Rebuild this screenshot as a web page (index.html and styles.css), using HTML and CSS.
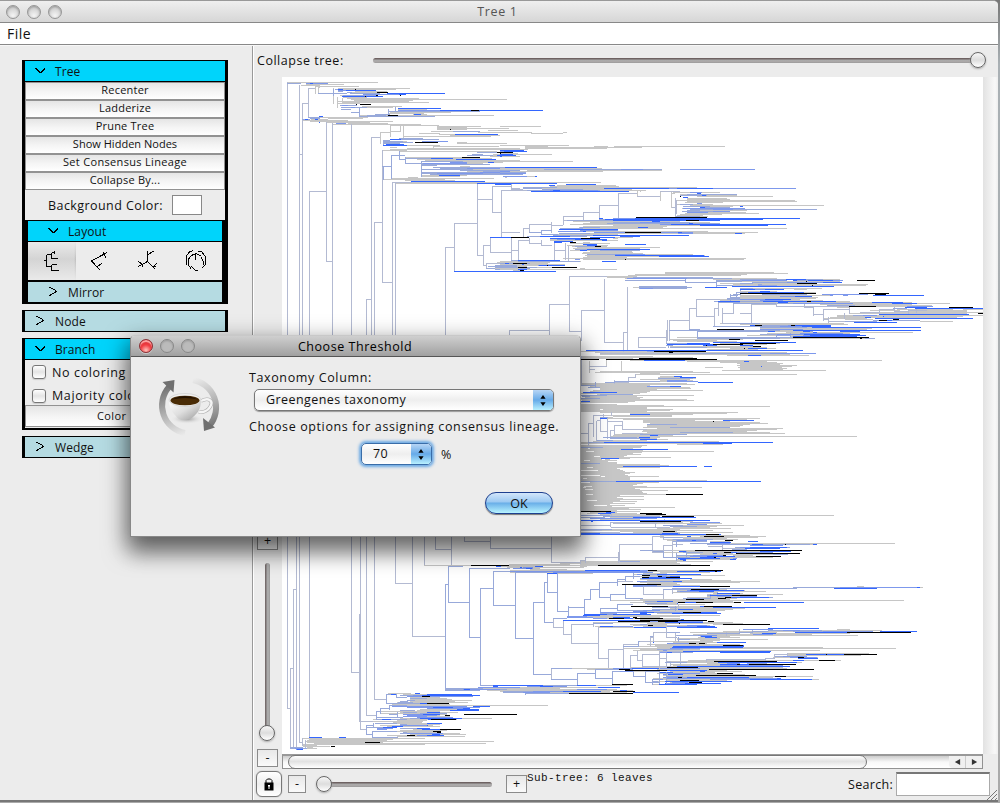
FILE: index.html
```html
<!DOCTYPE html>
<html lang="en">
<head>
<meta charset="utf-8">
<title>Tree 1</title>
<link rel="stylesheet" href="styles.css">
</head>
<body>
<div class="window">
  <header class="titlebar"><span class="lights"><i class="light"></i><i class="light"></i><i class="light"></i></span><span class="title">Tree 1</span></header>
  <nav class="menubar"><span>File</span></nav>
  <div class="main">
    <aside class="sidebar">
      <section class="panel">
        <div class="head open"><svg class="chev" viewBox="0 0 12 8"><path d="M1 1.500h2M2 2.500h2M3 3.500h2M4 4.500h2M5 5.500h3M7 4.500h2M8 3.500h2M9 2.500h2M10 1.500h1"/></svg><span>Tree</span></div>
        <div class="actions">
          <button class="act">Recenter</button><button class="act">Ladderize</button><button class="act">Prune Tree</button><button class="act tight">Show Hidden Nodes</button><button class="act wide">Set Consensus Lineage</button><button class="act">Collapse By...</button>
        </div>
        <div class="bgcolor"><span>Background Color:</span><i class="swatch"></i></div>
        <div class="subpanel">
          <div class="head open sub"><svg class="chev" viewBox="0 0 12 8"><path d="M1 1.500h2M2 2.500h2M3 3.500h2M4 4.500h2M5 5.500h3M7 4.500h2M8 3.500h2M9 2.500h2M10 1.500h1"/></svg><span>Layout</span></div>
          <div class="icons">
            <span class="icon on"><svg viewBox="0 0 24 24"><path d="M4.500 11.500h3M7.500 5.500v12M7.500 5.500h5M12.500 3.500v6M12.500 3.500h3M15.500 2v3M12.500 9.500h6M7.500 17.500h5M12.500 15.500v6M12.500 15.500h5M12.500 21.500h7"/></svg></span>
            <span class="icon"><svg viewBox="0 0 24 24"><path d="M3.500 12L19 3.500M15 3.500l3 5M3.500 12l8.500 9M9 18l5-4"/></svg></span>
            <span class="icon"><svg viewBox="0 0 24 24"><path d="M11.500 2v10.500l8 8M11.500 6l6-4M11.500 12.500l-9 5M2.500 12.500l4 3v2.500M16.500 17.500h3M17.500 17.500l3-3"/></svg></span>
            <span class="icon"><svg viewBox="0 0 24 24"><path d="M11.500 4v7M7 7c3-3 7-3 9.500 0M7 7l-3 4v4l3 5M2 16V7l4-4M4 3.500l5-2M14 2h3l4 5v9l-3 3M17 8l2 4v4M7 17l4 4h3"/></svg></span>
          </div>
          <div class="head sub"><svg class="chev" viewBox="0 0 12 12"><path d="M2 1.500h2M4 2.500h2M6 3.500h2M8 4.500h1M8 5.500h2M7 6.500h2M5 7.500h2M3 8.500h2M2 9.500h2"/></svg><span>Mirror</span></div>
        </div>
      </section>
      <section class="panel"><div class="head"><svg class="chev" viewBox="0 0 12 12"><path d="M2 1.500h2M4 2.500h2M6 3.500h2M8 4.500h1M8 5.500h2M7 6.500h2M5 7.500h2M3 8.500h2M2 9.500h2"/></svg><span>Node</span></div></section>
      <section class="panel">
        <div class="head open"><svg class="chev" viewBox="0 0 12 8"><path d="M1 1.500h2M2 2.500h2M3 3.500h2M4 4.500h2M5 5.500h3M7 4.500h2M8 3.500h2M9 2.500h2M10 1.500h1"/></svg><span>Branch</span></div>
        <label class="check"><i></i>No coloring</label>
        <label class="check"><i></i>Majority coloring</label>
        <button class="act tall">Color By...</button>
      </section>
      <section class="panel"><div class="head"><svg class="chev" viewBox="0 0 12 12"><path d="M2 1.500h2M4 2.500h2M6 3.500h2M8 4.500h1M8 5.500h2M7 6.500h2M5 7.500h2M3 8.500h2M2 9.500h2"/></svg><span>Wedge</span></div></section>
    </aside>
    <section class="viewer">
      <div class="collapse"><span class="lbl">Collapse tree:</span><div class="track"><i class="knob"></i></div></div>
      <div class="stage">
        <div class="zoomcol"><button class="sq">+</button><div class="vtrack"><i class="knob"></i></div><button class="sq">-</button></div>
        <svg class="tree" id="tree" viewBox="282 77 701 677" shape-rendering="crispEdges"></svg>
        <div class="vscroll"></div>
      </div>
      <div class="hrow"><div class="hscroll"><i class="pill"></i><i class="arrow"><svg viewBox="0 0 8 8"><path d="M7 0.500v7L1 4z"/></svg></i><i class="arrow"><svg viewBox="0 0 8 8"><path d="M1 0.500v7L7 4z"/></svg></i></div></div>
      <footer class="footer">
        <button class="lock"><svg viewBox="0 0 12 14"><path d="M3 6V3.500L4.500 2h3L9 3.500V6" fill="none" stroke="#000"/><rect x="1.500" y="5.500" width="9" height="8"/><path d="M5 8h2v1.500h-.5V12h-1V9.500H5z" fill="#fff"/></svg></button>
        <button class="sq minus">-</button><div class="track"><i class="knob"></i></div><button class="sq plus">+</button>
        <span class="status">Sub-tree: 6 leaves</span>
        <span class="lbl find">Search:</span><input class="search" type="text" aria-label="Search">
      </footer>
    </section>
  </div>
  <svg class="grip" viewBox="0 0 12 12"><path d="M1 11L11 1M5 11l6-6M9 11l2-2"/></svg>
</div>
<div class="dialog">
  <header class="dlgbar"><span class="lights"><i class="light red"></i><i class="light"></i><i class="light"></i></span><span class="title">Choose Threshold</span></header>
  <div class="dlgbody">
    <svg class="coffee" viewBox="0 0 64 64">
      <defs>
        <linearGradient id="a1" gradientUnits="userSpaceOnUse" x1="8" y1="10" x2="26" y2="60"><stop offset="0" stop-color="#707070"/><stop offset=".5" stop-color="#b0b0b0"/><stop offset="1" stop-color="#ececec"/></linearGradient>
        <linearGradient id="a2" gradientUnits="userSpaceOnUse" x1="56" y1="52" x2="38" y2="2"><stop offset="0" stop-color="#707070"/><stop offset=".5" stop-color="#b4b4b4"/><stop offset="1" stop-color="#ececec"/></linearGradient>
        <linearGradient id="cup" x1="0" y1="0" x2="1" y2="1"><stop offset="0" stop-color="#fff"/><stop offset=".5" stop-color="#dedede"/><stop offset="1" stop-color="#999"/></linearGradient>
        <radialGradient id="sh"><stop offset="0" stop-color="#999"/><stop offset="1" stop-color="#ececec" stop-opacity="0"/></radialGradient>
      </defs>
      <path d="M12 11A28 28 0 0 0 28 57" fill="none" stroke="url(#a1)" stroke-width="6"/><path d="M5.500 6L17.500 4 16.500 16.500z" fill="#707070"/>
      <path d="M36 4A28 28 0 0 1 53 49" fill="none" stroke="url(#a2)" stroke-width="6"/><path d="M46 42L47 55 58 51.500z" fill="#707070"/>
      <g transform="translate(1 -2)">
      <ellipse cx="29" cy="45" rx="17" ry="5" fill="url(#sh)"/>
      <path d="M43 27c8-4 13 0 9 6-2 4-8 6-11 5" fill="none" stroke="#aaa" stroke-width="3.600"/><path d="M43 27c8-4 13 0 9 6-2 4-8 6-11 5" fill="none" stroke="#f5f5f5" stroke-width="2.400"/>
      <path d="M11 26c0 9 5 15 10 19q6 2 11 0c7-4 11-10 11-19z" fill="url(#cup)"/>
      <ellipse cx="27" cy="26" rx="16" ry="6.500" fill="#f1f1f1" stroke="#c8c8c8" stroke-width=".6"/><ellipse cx="27" cy="26.500" rx="14.500" ry="4.800" fill="#4a2c06"/><path d="M13.500 25.500q13-7 27 0q-13-3-27 0" fill="#241200"/>
      </g>
    </svg>
    <div class="form">
      <span class="f1">Taxonomy Column:</span>
      <div class="select"><span>Greengenes taxonomy</span><i class="step"><svg viewBox="0 0 8 14"><path d="M4 1l2.800 4H1.200zM4 13l2.800-4H1.200z"/></svg></i></div>
      <span class="f2">Choose options for assigning consensus lineage.</span>
      <div class="pct"><div class="select small"><span>70</span><i class="step"><svg viewBox="0 0 8 14"><path d="M4 1l2.800 4H1.200zM4 13l2.800-4H1.200z"/></svg></i></div><span>%</span></div>
      <button class="ok">OK</button>
    </div>
  </div>
</div>
<script src="tree.js"></script>
</body>
</html>
```
FILE: styles.css
```css
* { box-sizing: border-box; }
body { margin: 0; width: 1000px; height: 803px; overflow: hidden; position: relative; background: linear-gradient(#777, #a9b0b4 8%, #aaa); font: 12.5px "Open Sans", "Noto Sans", sans-serif; color: #111; }
i { font-style: normal; display: block; }
button { font: inherit; color: #111; padding: 0; margin: 0; border-radius: 0; display: block; }
.window { width: 998px; height: 802px; background: #ececec; border-top: 1px solid #999; border-bottom: 2px solid #777; border-radius: 0 5px 0 0; display: flex; flex-direction: column; overflow: hidden; }
.titlebar { height: 22px; background: linear-gradient(#efefef, #d6d6d6); border-bottom: 1px solid #888; display: grid; grid-template-columns: 100px 1fr 103px; align-items: center; text-align: center; color: #555; flex: none; letter-spacing: .65px; }
.lights { display: flex; gap: 7px; padding-left: 6px; }
.light { width: 14px; height: 14px; border-radius: 50%; border: 1px solid #969696; background: radial-gradient(circle at 50% 80%, #f4f4f4, #ccc 75%); box-shadow: inset 0 1px 2px #999; }
.light.red { border-color: #8b3034; background: radial-gradient(circle at 50% 85%, #ffb3ad 5%, #f13e43 45%, #d7252c 80%); box-shadow: inset 0 2px 1px #ffaaa8, 0 1px 0 #ccc; }
.menubar { height: 22px; flex: none; background: #fff; border-bottom: 1px solid #888; padding-left: 7px; font-size: 14px; line-height: 21px; letter-spacing: .5px; }
.main { flex: 1; display: flex; min-height: 0; border-top: 1px solid #f7f7f7; }
.sidebar { width: 253px; flex: none; padding: 14px 24px 0 22px; border-right: 1px solid #999; display: flex; flex-direction: column; gap: 6px; }
.panel { border: solid #000; border-width: 1px 3px; background: #ececec; }
.panel:first-child { height: 244px; border-bottom-width: 2px; }
.panel:nth-child(3) { height: 92px; border-bottom-width: 2px; }
.head { height: 20px; background: #b5dbe2; display: flex; align-items: center; gap: 9px; padding-left: 9px; font-size: 12px; line-height: 19px; letter-spacing: .1px; }
.open { background: #00d4fb; }
.open + * { border-top: 1px solid #000; }
.chev { width: 12px; height: 12px; fill: none; stroke: #000; stroke-width: 1; shape-rendering: crispEdges; }
.open .chev { height: 8px; }
.sub { padding-left: 19px; }
.act { width: 100%; height: 18px; border: 1px solid #929292; background: linear-gradient(#e5e5e5, #f4f4f4 50%, #fff); font-size: 11px; line-height: 14px; padding-bottom: 2px; letter-spacing: .22px; text-align: center; }
.wide { letter-spacing: .32px; }
.tight { letter-spacing: .02px; }
.actions { height: 109px; }
.tall { height: 22px; letter-spacing: .4px; padding: 0; }
.bgcolor { height: 30px; display: flex; align-items: center; justify-content: center; gap: 9px; letter-spacing: .42px; }
.swatch { width: 30px; height: 20px; border: 1px solid #888; background: #fff; }
.subpanel { border: solid #000; border-width: 1px 3px 0; }
.icons { height: 41px; display: flex; border-bottom: 2px solid #000; }
.icon { width: 48px; display: flex; align-items: center; justify-content: center; }
.on { padding-right: 3px; background: linear-gradient(rgba(236,236,236,.9), transparent 45%, rgba(236,236,236,.9)), linear-gradient(90deg, #d4d4d4 96%, #bbb); }
.icon svg { width: 24px; height: 24px; fill: none; stroke: #000; stroke-width: 1; shape-rendering: crispEdges; }
.check { height: 23px; display: flex; align-items: center; gap: 6px; padding: 2px 0 0 7px; letter-spacing: .62px; white-space: nowrap; overflow: hidden; }
.check + .check { padding-top: 4px; }
.check i { flex: none; width: 14px; height: 14px; border: 1px solid #777; border-radius: 3px; background: linear-gradient(#fff, #e4e4e4 50%, #fff); box-shadow: 0 1px 1px #ccc; }
.viewer { flex: 1; display: flex; flex-direction: column; min-width: 0; border-left: 1px solid #fff; }
.collapse { height: 31px; display: flex; align-items: center; padding: 0 0 2px 3px; }
.lbl { letter-spacing: .52px; }
.find { letter-spacing: .3px; }
.collapse .lbl { width: 116px; }
.collapse .track { width: 612px; }
.track { height: 5px; border-radius: 3px; background: linear-gradient(#6e6262 25%, #aaa 35%, #aba8a8 75%, #999); position: relative; }
.knob { position: absolute; width: 16px; height: 16px; top: -6px; right: -1px; border-radius: 50%; border: 1px solid #666; background: linear-gradient(#f7f7f7, #ddd 50%, #fff); box-shadow: 0 1px 2px #aaa; }
.stage { height: 677px; display: flex; }
.zoomcol { width: 28px; padding: 455px 0 0 3px; }
.sq { width: 21px; height: 18px; border: 1px solid #8b8b8b; background: linear-gradient(#e8e8e8, #fafafa); line-height: 14px; text-align: center; }
.vtrack { width: 5px; height: 176px; margin: 13px 0 10px 8px; border-radius: 3px; background: linear-gradient(90deg, #756c6c 25%, #aaa 35%, #aaa 75%, #999); position: relative; }
.vtrack .knob { top: 162px; right: -5px; }
.tree { width: 701px; height: 677px; background: #fff; flex: none; }
.vscroll { flex: 1; background: linear-gradient(90deg, #e2e2e2, #f8f8f8 80%, #eee); }
.hrow { height: 15px; padding-left: 28px; }
.hscroll { width: 701px; height: 15px; border: 1px solid #929292; border-top: 2px solid #999; background: linear-gradient(#ccc, #f8f8f8 50%, #fff); display: flex; }
.pill { width: 579px; height: 14px; margin: -1px 82px 0 5px; border: 1px solid #777; border-radius: 7px; background: linear-gradient(#fff, #e2e2e2 45%, #fff); flex: none; }
.arrow { width: 17px; height: 12px; background: #f0f0f0; border-left: 1px solid #ccc; display: flex; align-items: center; justify-content: center; }
.arrow:nth-child(2) { border-left: 0; border-radius: 0 0 0 4px; }
.arrow svg { width: 7px; height: 8px; fill: #333; }
.footer { height: 32px; display: flex; align-items: center; padding-left: 2px; }
.lock { width: 26px; height: 26px; border: 1px solid #777; border-radius: 6px; background: linear-gradient(#fff, #eee 50%, #fff); display: flex; align-items: center; justify-content: center; box-shadow: 0 0 1px #777; }
.lock svg { width: 12px; height: 14px; }
.minus { width: 18px; margin: 0 19px 0 6px; }
.footer .track { width: 167px; }
.footer .knob { right: auto; left: -9px; }
.plus { margin-left: 14px; }
.status { font: 11px "Liberation Mono", monospace; letter-spacing: .4px; align-self: flex-start; margin-top: 3px; width: 321px; }
.search { width: 94px; height: 24px; margin-left: 3px; border: 1px solid #aaa; border-top: 2px solid #777; border-radius: 0; background: #fff; padding: 2px; }
.grip { position: absolute; left: 986px; top: 789px; width: 12px; height: 12px; stroke: #777; fill: none; }
.dialog { position: absolute; left: 130px; top: 335px; width: 451px; height: 202px; border: 1px solid #888; border-top-color: #c8c8c8; border-radius: 5px 5px 0 0; background: #ececec; box-shadow: 0 10px 23px 3px rgba(0,0,0,.55), 0 18px 20px rgba(0,0,0,.15); }
.dlgbar { height: 21px; border-radius: 4px 4px 0 0; background: linear-gradient(#cfcfcf, #a0a0a0); border-bottom: 1px solid #555; display: grid; grid-template-columns: 100px 1fr 101px; align-items: center; text-align: center; letter-spacing: .55px; color: #000; }
.dlgbar .lights { padding-left: 8px; }
.dlgbar .light:not(.red) { border-color: #888; background: #bbb; }
.dlgbody { display: flex; padding: 11px 20px 0 26px; }
.coffee { width: 64px; height: 64px; margin-top: 8px; }
.form { flex: 1; margin-left: 28px; display: flex; flex-direction: column; white-space: nowrap; }
.f1 { height: 21px; line-height: 20px; letter-spacing: .62px; }
.select { width: 300px; height: 22px; margin-left: 5px; border: 1px solid #777; border-radius: 5px; background: linear-gradient(#fff, #eee 50%, #fff); box-shadow: 0 1px 1px #999; display: flex; justify-content: space-between; line-height: 20px; padding-left: 11px; letter-spacing: .42px; overflow: hidden; flex: none; }
.step { width: 20px; height: 20px; background: linear-gradient(#b7d5f5, #66aae8 50%, #b8f0ff); display: flex; align-items: center; justify-content: center; }
.step svg { width: 8px; height: 13px; }
.f2 { height: 31px; line-height: 32px; letter-spacing: .62px; }
.pct { display: flex; align-items: center; gap: 9px; margin: 1px 0 0 107px; }
.small { width: 71px; border-color: #3a6da8; box-shadow: 0 0 3px 2px #6ba9e4; }
.ok { width: 68px; height: 22px; margin: 27px 0 0 236px; border: 1px solid #1d3f8f; border-radius: 11px; background: linear-gradient(#d3e6fa, #9cc9f2 45%, #69aee8 50%, #b8f4ff); box-shadow: 0 1px 1px #777; line-height: 19px; }
```
FILE: tree.js
```js
// Branch tables. Every table has an origin and its marks in thirds of a pixel:
//   y:x1-x2 is a horizontal branch, y1~y2:x1-x2 a bundle of them, x|y1-y2 a vertical branch.
const COLORS = { g: '#c6c6c6', w: '#ffffff', s: '#b3bad2', m: '#98a9da', p: '#7d98ec', b: '#3366ff', k: '#000000' };
const TABLES = [
{ x: 280, y: 70, d: {
g: `38:22-294 43:78-192 46:62-120 49:106-237 106|49-70 115|52-70 52:115-120 55:175-390 58:180-348 61:190-220 64:225-322 67:210-310 73:325-363 76:180-240 81:190-262 84:200-417 88:212-681 91:222-400 94:173-388 97:188-447 100:173-240 160|55-100 173|82-112 188|85-100 109:245-366 112:250-340 118:355-440 124:355-550 127:330-512 130:326-432 133:400-440 136:240-642 142:120-264 145:145-250 148:93-145 151:68-204 154:90-339 157:139-270 160:205-324 163:160-423 166:331-476 331|169-200 361|166-184 370|169-202 169:470-603 172~177:470-560 175:560-687 178:470-545 181:625-714 184:453-530 187:595-720 190:450-480 193:478-530 196:510-660 199:420-633 184:331-361 187:301-331 301|187-220 199:370-420 190:418-452 214:320-380 220:531-681 217:531-560 226:308-480 229:461-658 232:331-350 235:380-720 238:331-720 241:307-380 244:358-650 253:640-720 256:620-700 259:630-720 262:376-585 265:390-635 268:410-600 271:435-720 274:425-720 277:540-670 280:440-610 283:460-625 289:540-570 298:580-720 304:560-720 313:570-640 316:423-560 319:424-540 322:385-415 325:335-642 328:308-495 331:375-525 337:360-720 340:346-592 461|229-238 576:650-720 583:670-720 586:695-720 595:645-720 601:700-720 604:670-720`,
s: `22|38-810 59|46-810 67|100-810 85|55-143 88|364-810 139|157-575 157|160-810 214|164-810 260|688-810 274|202-810 283|457-810 307|240-637 337|337-810 346|340-810 496|532-810 523|460-604 592|340-556 610|526-586 637|349-428 664|361-502 631|502-547 694|502-575 715|511-575 619|580-595 688|781-810 253:59-67 100:67-85 55:85-106 364:88-139 574:139-157 688:260-274 202:274-301 457:283-307 637:307-337 337:337-395 532:496-523 460:523-592 388:592-637 428:637-664 361:664-720 487:664-720 556:592-610 526:610-631 547:631-694 541:694-715 511:715-720 586:610-619 580:619-720 349:637-694 781:688-720 694|343-355 355:694-720`,
m: `40:22-62 70:115-160 142:85-120 145:90-120 148:67-90 70:160-200 160|58-75 58:165-180 64:173-190 67:200-215 70:210-300 76:190-290 106:180-230 112:183-260 118:183-212 127:212-238 238|112-138 139:238-465 136:260-318 133:285-330 124:325-600 326|118-136 346|112-120 184:520-600 205:358-430 208:350-476 211:310-330 214:310-370 217:310-400 220:310-360 223:320-345 310|211-223 256:335-376 358|243-268 268:358-376 376|262-280 280:376-430 289:307-335 335|256-325 310|289-328 424|274-318 283:425-630 286:425-470 292:460-690 295:480-570 298:425-580 301:540-720 304:610-720 307:425-705 310:425-695 313:450-675 274:424-550 265:376-500 256:560-640 253:575-610 247:590-650 586:645-695 589:625-720 592:645-690 595:619-645 598:645-720`,
p: `40:78-144 61:173-230 73:250-375 106:185-205 112:212-225 115:354-400 121:355-550 160:168-198 214:425-504 280:430-560 295:560-670 307:600-705 310:470-610 319:670-714 277:510-560`,
b: `40:90-100 61:198-288 70:322-495 58:175-190 79:185-310 73:358-377 115:354-483 121:480-720 133:402-423 139:117-129 148:75-84 148:105-114 157:117-120 193:525-654 208:330-362 223:317-372 226:308-380 241:670-720 247:650-700 253:675-699 256:652-707 265:453-520 268:529-648 277:625-642 292:675-720 316:477-540 334:393-615 340:592-720 343:645-692 502:631-694 571:715-720 604:523-669 580:675-687`,
k: `58:225-228 67:292-324 76:289-294 79:255-258 76:361-364 103:240-273 103:228-231 121:573-597 136:324-355 178:510-513 217:405-474 247:650-699 250:660-663 262:546-600 502:694-720 580:699-720 592:714-720` } },
{ x: 500, y: 70, d: {
g: `88:0-21 169:0-123 175:0-27 181:0-54 187:0-95 190:94-188 187:188-201 220:0-21 226:0-207 229:76-144 232:76-340 235:76-321 229:282-324 229:342-675 232:340-426 238:0-84 250:0-54 253:0-156 274:0-219 295:0-306 298:0-132 301:80-486 304:0-309 319:60-105 322:15-21 337:0-303 346:170-348 349:150-357 352:120-591 355:120-312 358:130-395 361:70-437 364:420-424 367:520-660 367:540-570 370:515-525 373:540-700 376:555-710 379:590-819 385:560-681 388:560-690 391:530-885 394:560-890 397:555-670 406:570-972 403:530-640 409:570-700 415:545-620 421:600-740 424:560-690 427:600-738 430:555-777 433:540-666 436:530-610 439:540-623 448:365-400 454:220-540 457:270-630 460:250-420 463:210-480 466:340-600 469:248-501 472:236-490 475:210-861 478:180-340 484:175-624 487:460-774 490:255-735 493:175-355 508:150-300 511:150-354 517:250-270 520:210-330 526:200-324 529:215-320 532:230-480 535:220-420 541:210-400 544:270-395 547:250-400 550:245-429 553:260-579 556:255-615 559:260-480 562:250-380 565:190-738 568:250-732 574:0-243 577:0-150 580:80-145 583:0-195 586:50-150 589:50-80 592:60-158 595:240-255 598:0-351 607:495-822 610:495-864 613:405-741 616:385-723 619:322-410 622:322-640 625:376-736 628:640-1020 496|607-613 406|613-619 385|616-625 634:720-1010 640:660-890 643:700-950 646:700-1050 652:400-540 655:720-965 664:730-800 667:720-948 682:700-954 685:715-850 688:590-840 691:660-970 694:720-1050 697:700-1050 760:660-890 763:720-875 766:770-940 772:780-1030 775:860-950 778:820-1030 790:800-1050 796:740-1050 802:530-770 805:620-660 808:700-730 700:840-1020 712:1010-1050 736:1010-1030 742:990-1050 481|364-390 515|367-412 412|364-379 503:320-400 506:340-353`,
s: `4|361-500 34|346-356 34|502-574 55|511-572 70|475-502 88|463-488 88|505-520 155|457-487 190|439-463 250|427-450 298|406-445 355|370-442 163|515-572 196|520-568 205|530-574 208|619-785 244|721-810 313|628-810 382|652-810 370|787-810 28|781-810 148|703-795 415|802-810 502|751-810 508|751-780 568|715-780 589|688-740 643|715-765 655|694-735 667|715-760 700|698-730 754|703-762 829|700-709 940|709-733 970|718-751 985|745-756 913|700-712 349:0-34 361:4-95 541:34-55 511:55-88 475:70-88 463:88-155 466:155-190 451:190-250 439:190-250 427:250-298 406:298-355 370:355-412 379:412-481 364:481-540 412:515-527 520:88-125 125|511-525 526:125-155 541:163-196 781:28-148 703:148-208 619:208-322 721:244-313 784:208-244 787:370-382 751:508-568 715:568-589 688:589-660 739:589-643 715:643-655 730:667-700 760:667-754 703:754-829 709:829-940 712:913-940 733:940-970 718:970-1050 745:985-1010 754:985-1050 802:415-498 781:498-502 527|385-438 530|390-430 358:34-70`,
m: `352:70-170 355:70-125 358:125-250 361:80-300 373:560-710 376:540-620 409:548-630 412:600-690 418:570-950 403:540-580 421:560-600 424:545-690 439:527-600 448:298-360 451:200-480 460:320-660 457:340-570 472:240-300 475:180-250 478:178-300 487:88-125 125|481-494 481:125-155 493:125-175 490:178-270 496:160-300 499:80-260 538:225-450 541:300-420 556:350-500 553:260-350 529:225-300 574:55-240 571:34-130 580:0-90 586:0-50 592:25-110 595:60-90 604:0-60 622:400-640 625:560-695 631:376-556 637:556-650 556|625-637 649|631-650 652:418-575 649:418-560 418|649-656 655:418-560 634:650-900 637:756-1010 646:649-700 631:650-730 649:770-870 673:700-720 676:690-715 682:690-730 685:682-720 688:682-850 691|673-690 709|667-688 721|658-680 694:643-655 667:709-740 697:655-840 700:700-865 769:750-860 778:568-600 781:568-760 784:593-745 802:593-740 592|781-805 769:640-790 784:860-940 787:870-940 793:780-870 796:850-960 799:870-1050 802:740-890 805:592-740 298:132-485 307:0-78 313:0-70`,
p: `244:0-75 298:362-430 298:540-765 304:0-30 310:0-78 319:28-80 361:150-295 355:506-888 367:570-606 400:590-605 415:548-736 418:640-700 427:560-625 424:640-690 445:340-440 463:480-530 457:420-510 481:240-355 484:175-250 487:282-580 490:535-580 508:170-295 553:345-435 568:225-240 586:115-160 634:750-880 637:885-1026 631:725-860 625:380-560 655:420-460 670:770-850 676:720-780 694:655-690 700:833-865 769:860-950 781:950-1020 787:870-920 778:930-1040 793:870-990 802:870-920 676:940-1000 676:1030-1044`,
b: `121:0-129 241:0-72 244:12-81 253:0-39 256:20-48 259:0-6 292:15-291 319:105-111 340:0-170 343:0-34 343:198-288 346:147-165 355:312-506 355:531-640 364:93-387 361:160-180 376:605-618 370:590-603 382:550-564 409:720-729 412:600-615 445:298-310 445:405-900 448:315-789 451:340-660 454:455-480 463:513-858 466:600-804 460:568-579 472:415-444 478:178-355 490:705-726 484:250-258 487:535-546 496:280-567 499:120-210 499:360-420 502:0-33 502:270-345 505:150-245 508:225-320 514:163-220 517:163-185 511:305-322 523:375-438 523:250-290 526:260-290 538:262-450 541:240-260 556:345-612 559:477-627 571:55-180 574:306-348 586:118-195 580:15-27 583:65-72 598:55-82 604:0-168 628:725-815 628:858-905 631:880-963 637:920-1026 649:697-1002 652:614-680 646:830-850 658:720-852 667:830-911 670:760-870 679:745-792 679:885-936 688:820-873 694:655-1008 697:835-863 766:750-850 769:790-993 772:940-1020 778:875-1050 781:592-688 784:780-930 790:905-932 796:940-1050 799:960-1050 802:870-1050`,
k: `247:0-39 250:0-3 379:540-543 442:408-621 451:558-597 487:375-483 502:33-87 505:243-300 517:210-228 529:285-303 568:375-378 580:39-81 592:54-81 592:156-231 601:60-72 586:141-144 634:918-921 640:891-951 646:936-939 670:720-948 694:921-933 766:765-786 766:873-885 778:651-732 802:885-1050 808:687-720 709:1047-1050` } },
{ x: 740, y: 240, d: {
g: `55:0-18 58:0-12 97:0-102 100:0-144 103:0-21 106:0-3 115:0-110 118:0-270 124:5-300 127:200-260 133:100-384 136:65-378 130:40-170 145:0-246 148:163-201 154:0-110 166:0-270 169:0-215 172:0-234 175:100-228 178:0-180 181:0-170 184:215-260 187:0-515 190:340-630 193:240-516 196:330-575 199:220-580 202:500-520 211:390-480 208:470-640 211:530-680 208:670-729 214:470-680 217:360-729 220:330-680 226:720-729 226:300-729 229:290-670 232:290-650 235:250-380 238:315-400 244:540-639 250:0-312 253:0-324 256:190-270 262:170-270 265:60-396 268:85-380 271:90-180 274:105-190 277:138-519 280:200-320 283:220-350 286:110-200 289:150-240 295:60-405 325:55-108 337:0-117 340:45-228 343:45-150 346:0-207 361:0-426 367:0-70 370:0-111 373:30-105 376:0-171 379:0-156 382:0-123 385:30-125 388:0-130 391:0-258 403:0-171 499:0-90 535:0-60 547:0-60 550:0-84 565:0-129 568:0-111 577:0-90 580:0-135 589:0-351`,
s: `34|193-250 109|190-200 193|190-202 220|199-225 250|211-240 265|232-243 328|199-220 418|208-223 220:0-34 193:34-110 199:109-195 199:205-327 202:193-220 223:220-250 208:250-328 238:250-265 244:265-320 217:360-420 208:418-465 463|202-215 505|208-220 214:463-505 211:505-560 530|209-217 313|220-235`,
m: `118:0-250 121:170-240 130:0-40 136:55-110 133:55-65 145:0-40 163:65-200 160:0-110 184:0-70 190:110-340 196:260-345 226:340-380 241:400-540 244:315-410 250:0-60 259:0-120 262:60-200 256:40-200 274:25-85 271:0-60 295:0-110 286:110-150 283:150-280 292:150-280 151|280-293 109|286-295 295:375-405 325:0-60 331:0-140 205:460-500 340:210-228 319:0-55`,
p: `121:215-310 127:140-305 148:30-75 163:245-385 169:120-170 178:0-120 181:60-130 190:160-340 199:500-580 226:370-410 256:145-205 259:120-185 268:60-190 280:180-310 286:190-340 331:0-150 346:0-60`,
b: `118:138-198 121:205-280 127:250-305 139:0-282 148:0-45 154:60-90 157:25-192 166:400-552 169:165-216 178:75-153 184:185-288 187:113-144 187:396-488 190:456-531 202:495-560 205:525-729 223:418-687 235:405-699 229:429-432 232:375-393 247:342-471 241:440-456 256:40-65 256:165-273 262:215-543 271:185-543 277:218-231 283:205-300 286:210-378 289:240-350 307:0-168 316:0-40 331:150-189 346:25-63 364:12-27 373:15-30 379:63-66 541:0-42`,
k: `121:351-405 124:198-201 130:171-231 136:216-219 160:0-228 160:357-447 163:405-438 184:200-213 199:327-408 202:627-699 220:714-729 238:459-477 241:417-441 256:45-66 256:153-165 268:0-12 286:270-282 292:159-387 295:360-366 301:72-144 310:0-108 313:0-9 319:39-63` } },
{ x: 580, y: 330, d: {
g: `28:270-480 31:280-410 34:290-470 40:420-600 43:270-560 49:270-510 52:280-560 58:380-535 55:450-588 64:0-300 67:45-620 70:460-690 73:60-560 76:440-687 79:0-219 82:0-340 85:0-160 91:150-840 88:250-380 94:320-560 97:420-590 100:470-610 103:480-600 106:470-651 109:480-620 112:475-605 115:480-620 118:485-590 121:425-738 112:375-430 124:60-340 127:45-390 130:180-240 133:165-651 139:240-300 142:235-330 145:235-348 148:180-330 151:240-340 154:240-354 160:0-320 163:0-345 166:10-210 169:30-260 172:30-330 175:60-333 178:60-230 181:40-369 184:30-210 187:20-200 190:0-180 193:50-150 196:0-342 199:10-170 202:15-189 205:10-180 208:0-320 211:5-342 214:10-165 217:0-145 223:0-110 226:0-252 229:0-570 232~245:0-200 238:200-279 241:200-270 247:60-474 250:150-440 253:150-340 256:70-276 259:100-275 262:60-100 265:80-540 268:130-500 271:190-345 274:190-450 277:190-540 280:210-564 283:200-510 286:200-490 289:200-480 292:190-450 295:230-609 298:187-590 301:190-530 304:185-500 307:200-570 310:180-615 313:105-320 316:100-280 319:90-831 322:80-240 325:90-230 328:180-264 331:60-200 334:40-417 337:0-100 340:0-370 343:290-429 346:0-200 349:0-186 352:0-183 355:0-160 358:0-125 361:0-190 364:0-402 367:0-185 370:0-160 373:0-183 376:0-140 379:0-132 382:0-273 385:0-150 388:0-90 391:0-110 394:0-85 397~402:0-110 403:0-240 406:0-268 409:0-130 412:0-240 415:0-110 418:0-120 421:0-130 424:0-135 427:0-165 430:0-150 433:0-135 436:0-145 439:0-237 442~450:0-150 451:0-381 454:0-110 457:0-237 460:0-190 463:0-170 466:0-160 469:0-200 472:0-366 475:0-165 478:0-180 481:0-264 484:0-185 487:0-190 490:0-200 493:0-258 496:0-120 499:0-192 502:0-110 505:0-130 508:0-192 511:0-120 514:0-170 517:0-100 520:0-165 523:0-90 526:0-135 529:0-95 532:0-285 535:0-147 538:0-183 541:0-110 544:90-180 547:30-110 556:90-762 550:20-170 553:60-250 562:90-340 568:60-180 574:180-340 577:90-310 580:230-425 586:250-492 589:290-410 592:280-391 595:230-452 598:60-300 601:65-400 604:120-290 607:160-459 610:60-290 616:240-510 619:360-558 622:240-535 625:310-440 628:250-475 631:260-340 634:390-450 640:450-945 643:520-710 655:430-560 664:300-420 667:240-400 673:380-450 679:340-470 688:290-450 691:120-310 694:0-399 697:0-280 700:0-260 703:0-333 706:0-60 709:0-20 712:0-12 28|94-127 124|94-125 79|91-110`,
w: `238:60-69 354:24-31 365:18-42 379:42-60 388:66-74 391:12-30 412:20-40 422:0-55 436:0-60 440:64-74 445:10-20 456:0-30 468:12-36 472:9-18 477:15-40 493:18-40 512:20-50 527:42-80 103:440-450`,
s: `4|79-165 73|0-38 130|10-65 142|0-62 175|22-53 259|0-40 268|0-32 145|142-157 166|133-142 103|151-160 25|280-345 40|256-320 49|274-330 61|262-304 82|265-325 70|253-265 127|274-298 91|301-325 103|286-313 94|247-256 38:73-130 7:130-142 22:175-259 53:175-259 109:28-80 157:103-145 142:145-166 310:0-25 280:25-40 256:40-70 271:50-61 304:61-82 274:82-127 298:127-200 286:103-127 310:127-190 301:91-105 70:60-455 91|577-590 226|580-590 253|568-580 94|550-560 217|619-663 277|628-683 118|643-695 250|619-628 577:92-250 580:100-230 586:0-92 592:92-270 601:0-65 607:0-120 619:217-250 643:118-218 661:217-250 661:250-277 682:15-118 682:277-290 691:0-16 643:277-310 649:385-430 427|640-657 655:427-510 448:0-5 118:28-45`,
m: `1:268-600 25:352-600 352|0-25 16:590-620 40:259-320 46:259-280 52:270-380 61:130-400 70:300-700 64:200-230 145:235-340 154:103-240 157:75-106 166:4-48 46|157-170 172:25-60 193:60-160 196:0-80 199:5-30 205:0-60 262:60-84 283:200-290 292:270-450 307:300-460 313:180-320 322:70-170 325:90-210 331:50-100 337:25-100 352:0-70 409:130-350 454:0-290 556:0-90 559:70-240 562:0-75 571:0-300 586:250-310 589:270-350 598:0-95 610:0-300 613:60-290 622:250-310 628:280-400 634:280-380 640:330-450 643:380-690 652:465-630 658:455-500 667:310-430 676:290-390 682:290-350 694:120-320 697:60-260 400:0-60 289|628-650 265|40-52`,
p: `70:570-708 91:192-316 169:200-300 154:260-355 151:260-320 409:210-350 565:30-230 577:330-420 583:320-380 640:390-450 652:480-620 646:510-610 631:290-380 667:390-440 685:300-470 679:320-400 13:590-840`,
b: `1:640-840 4:780-840 13:673-840 16:740-838 19:640-760 37:400-648 43:260-400 40:320-390 46:370-410 61:18-669 55:505-561 76:505-543 91:192-314 94:492-507 109:543-546 139:282-306 142:300-348 157:354-459 169:270-303 187:10-111 214:0-30 253:150-210 265:60-80 271:430-522 322:178-210 316:210-234 328:180-231 337:72-579 340:370-456 358:123-264 385:63-117 409:130-351 409:372-396 454:108-543 547:77-105 550:53-93 562:160-348 571:0-390 574:33-39 610:0-60 610:250-294 613:0-423 619:320-333 631:335-348 634:505-534 637:390-453 643:700-711 643:515-550 652:510-620 655:495-600 664:297-345 682:465-579 685:330-378 688:400-468 691:305-318`,
k: `22:645-840 28:447-480 31:525-624 40:480-588 43:400-489 46:378-381 49:519-543 55:492-495 64:222-378 67:267-279 85:178-350 88:0-57 88:78-411 274:399-402 493:258-369 544:0-93 550:180-246 553:197-258 559:246-342 574:180-303 604:249-285 613:378-417 619:372-432 631:435-459 643:615-618 661:345-666 667:432-453 670:588-660 676:402-438 679:480-603 706:54-390` } },
{ x: 400, y: 530, d: {
g: `105:73-213 103:327-510 106:327-595 109:300-420 112:320-552 115:355-420 118:390-500 121:330-555 124:400-500 127:330-570 130:470-578 97:480-795 100:480-840 103:540-640 211:630-840 217:690-800 223:790-840 208:720-800 256:560-840 259:510-840 262:580-670 265:590-840 277:580-840 283:690-800 289:585-690 292:595-800 286:700-840 334:760-840 343:740-840 349:670-840 358:720-780 361:700-800 415:510-640 418:560-700 412:690-840 424:700-740 421:760-840 436:790-840 463:756-780 466:460-680 472:240-630 475:240-480 478:235-650 481:260-700 484:300-630 487:330-680 490:430-500 490:0-33 493:10-100 502:30-120 505:45-140 508:30-155 511:40-215 514:30-165 517:40-204 520:30-105 523:0-120 526:0-444 529:0-160 538:60-210 541:50-230 544:0-100 547:0-175 556:60-120 559:30-150 562:120-160 565:0-276 568:0-170 571:0-80 574:0-70 577:0-60 583:0-120 586:0-100 598:40-120 601:0-75 604:0-120 607:10-100 610:60-130 613:30-198 616:0-120 619:0-195 625:0-75 634:0-282 640:0-258 643:0-75 355:670-800 148:720-840 166:780-840 133:700-760 361:770-800`,
s: `37|18-320 73|18-106 106|18-59 154|18-106 193|18-34 271|18-55 454|18-97 541|91-100 556|82-97 655|67-97 658|43-80 757|18-67 790|45-82 818|30-45 320|0-0 160:0-37 319:37-136 58:106-154 34:193-271 55:271-454 97:454-541 91:541-556 82:556-655 67:757-790 43:658-757 18:757-790 46:790-818 595|292-385 625|358-412 670|343-415 691|376-410 712|364-390 727|373-410 778|364-385 799|367-407 514|283-340 490|271-313 460|265-292 580|277-290 385:595-625 358:625-670 376:691-712 373:727-778 385:778-800 340:514-595 292:460-490 313:490-514 283:514-580 343:670-716 391:712-727 394:799-840 409:727-840 454|415-448 154:652-700`,
m: `145|109-217 136|163-482 208|115-322 241|175-466 280|124-226 346|127-325 400|217-433 433|157-277 442|130-187 472|130-245 505|232-257 553|208-253 571|178-208 598|157-202 631|193-211 652|148-165 676|167-205 676|139-150 700|130-145 730|168-193 790|178-207 505|230-245 715|334-345 750|320-335 760|307-335 799|295-320 109:145-190 163:136-145 217:145-208 115:208-330 322:208-241 175:241-280 124:280-400 226:280-346 325:346-400 217:400-433 157:433-442 187:442-472 244:472-505 232:505-553 208:553-571 178:571-598 157:598-652 202:598-631 193:631-676 205:676-730 193:730-790 178:790-840 207:790-840 148:652-676 139:676-720 277:433-460 265:460-500 433:400-454 448:454-532 532|430-465 430:532-586 586|418-445 418:586-700 445:586-637 637|424-463 424:637-700 700|421-440 439:700-736 736|421-457 457:736-778 454:757-800 757|448-462 778|424-462 415:454-515 334:715-750 319:750-760 307:760-840 349:670-716 322:800-830 600|235-248 652|223-242 235:600-652 223:652-700 241:652-740 250:600-650 127:346-440 478:136-320 481:136-240 475:136-250 466:241-530 484:310-430 487:310-380 376|484-492 490:376-510 496:0-60 499:45-80 511:20-45 514:0-25 523:70-120 550:0-140 553:10-70 559:10-60 547:10-50 565:30-130 580:0-70 583:0-50 595:0-60 607:10-60 610:0-40 541:0-45 280:580-640`,
p: `115:340-400 112:370-400 124:330-840 127:460-760 133:710-840 139:730-820 154:710-790 166:700-800 169:700-730 247:600-840 244:700-770 253:560-680 256:570-600 265:580-620 262:500-580 271:490-600 289:640-700 367:780-840 361:790-820 415:640-700 424:660-700 430:780-840 433:790-840 442:790-840 448:780-840 463:800-840 469:380-500 478:190-300 472:235-360 484:400-550 487:370-450 532:20-200 529:130-200 556:20-60 535:80-170 562:50-160 595:60-90 496:40-120 586:30-60 478:530-620 259:500-560`,
b: `109:288-303 109:405-429 112:360-366 115:378-396 121:555-765 124:820-840 130:442-471 139:780-800 142:730-840 133:760-800 214:768-820 220:800-834 253:640-753 253:553-620 256:550-600 247:738-780 265:670-700 271:490-720 268:720-790 289:600-640 292:703-798 415:695-775 352:812-840 367:800-840 427:780-840 436:799-830 445:800-815 460:795-840 421:690-760 466:280-430 469:280-295 469:420-458 472:593-660 478:192-210 484:490-603 481:660-681 487:700-837 466:532-588 493:105-215 496:175-240 490:45-60 520:60-90 529:240-270 532:100-204 541:173-237 538:205-231 535:165-210 553:30-48 547:80-120 565:70-186 568:85-140 580:70-126 586:60-84 595:52-90 598:85-118 607:90-115 613:95-130 589:0-8 616:0-40 262:640-690 337:760-763 10:540-600 13:540-840 10:786-834`,
k: `4:789-825 106:213-327 106:594-840 121:744-771 136:725-750 139:774-786 142:730-747 163:666-783 229:693-804 262:699-711 265:627-672 265:705-789 271:783-840 274:654-780 286:744-760 418:657-690 421:675-801 463:636-699 484:639-705 490:507-699 499:66-90 520:80-147 553:192-351 556:135-150 568:92-168 598:120-183 604:98-123 607:110-123 616:21-45` } },
{ x: 640, y: 550, d: {
g: `1:96-190 4:140-400 7:190-270 10:140-280 13:180-430 16:280-340 19:110-350 22:140-400 25:120-280 28:110-270 31:0-130 34:0-219 37:0-110 40:0-102 43:0-153 61:50-220 64:20-240 67:60-210 70:10-80 73:0-125 76:10-255 79:0-120 85:0-140 88:150-216 91:20-272 94:70-360 97:0-300 100:20-110 103:60-120 106:50-180 109:650-672 112:840-849 115:95-150 118:100-260 121:110-315 124:130-378 127:100-230 130:220-310 133:200-429 136:280-350 139:200-300 142:140-390 145:130-290 148:70-270 151:0-792 154:10-280 157:0-300 160:15-110 163:20-195 169:85-210 172:35-270 175:90-315 178:100-280 181:60-254 184:20-230 187:150-200 190:50-180 196:0-240 199:0-88 202:0-60 205:70-96 208:0-130 217:170-280 220:20-310 223:220-300 226:110-210 229:10-190 232:110-200 238:590-630 241:540-726 244:250-540 247:150-410 250:330-630 253:160-516 256:175-654 259:180-270 262:175-300 265:110-240 268:110-384 271:180-240 274:0-220 277:100-290 280:90-200 283:60-300 286:45-310 289:30-270 292:50-549 295:0-768 298:0-180 301:80-540 304:60-320 313:445-500 310:440-687 316:440-663 319:405-490 322:400-535 325:480-500 328:200-330 331:145-603 334:90-250 337:140-485 340:200-260 343:90-340 346:100-400 349:90-210 352:10-430 355:30-440 358:50-520 361:130-260 364:90-307 367:100-225 370:50-280 373:80-316 376:75-340 379:85-519 382:130-400 385:40-390 388:70-537 391:80-260 394:55-190 397:90-180 400:80-160 403:36-60`,
s: `10|110-133 70|118-146 115|166-178 31|262-287 40|247-277 79|235-262 106|250-270 7|313-353 58|304-350 91|334-350 121|304-350 376|325-334 403|313-325 442|310-320 199|328-334 133:10-70 274:0-31 262:31-40 247:40-79 313:7-58 304:58-120 349:58-92 328:199-376 325:376-403 313:403-445 262:79-106 256:106-175 97|118-130 337|238-250 385|235-245 298|238-250 259|247-256`,
m: `70|4-22 109|10-30 139|5-20 4:38-70 1:0-38 22:70-110 22:110-150 16:140-190 13:400-445 73:0-60 76:50-80 85:0-20 94:20-70 118:70-230 115:95-470 109:10-100 124:110-150 136:200-240 211|132-145 232|127-140 145:130-212 142:260-400 139:230-270 154:15-90 172:35-110 181:0-40 106|170-180 178:35-110 223:0-20 232:0-60 244:337-385 247:298-340 250:200-300 256:110-180 241:385-545 244:460-550 115|262-273 268:115-150 298:50-130 307:95-160 337:75-140 319:405-500 364:15-60 15|364-397 397:15-40 37|388-404 388:37-60 58|367-400 79|367-400 379:80-130 370:80-110 382:120-210 112:460-600 160:15-80 340:320-380`,
p: `19:150-250 16:160-250 73:60-120 61:0-30 79:60-120 94:60-115 112:600-830 121:140-250 124:120-180 139:300-350 145:150-180 169:180-230 181:10-60 187:40-130 214:30-190 217:90-180 229:80-210 226:140-200 238:310-400 241:430-480 244:550-700 253:340-400 256:175-230 280:80-150 295:90-180 313:500-700 319:430-490 322:450-530 346:240-430 355:60-180 361:95-200 370:100-180 385:80-410 388:210-440 400:80-150 397:95-145 340:260-300 7:280-400`,
b: `4:360-453 7:270-290 10:220-232 19:200-285 22:180-225 25:115-240 28:120-138 64:110-242 73:50-183 82:70-115 79:90-120 85:5-156 94:98-126 109:98-180 112:830-840 115:582-711 124:178-222 121:150-312 130:232-300 136:210-330 142:270-387 157:312-492 157:130-190 172:220-408 154:50-99 169:180-270 178:115-160 187:0-42 187:180-231 190:0-20 193:0-33 190:95-243 211:80-130 208:123-132 217:75-190 229:170-225 232:0-78 232:110-231 235:385-537 244:720-831 247:465-620 250:366-408 259:182-215 262:195-232 277:39-42 277:232-318 286:280-312 289:100-311 292:95-310 307:240-390 304:130-393 313:498-700 325:475-534 331:460-492 337:235-470 343:240-360 349:110-450 355:0-57 361:80-200 364:180-195 373:85-130 382:140-327 385:410-423 388:330-516 394:75-276 400:135-243 403:58-171 427:22-117`,
k: `1:165-486 7:252-273 10:288-480 19:348-395 22:222-228 46:0-210 61:24-51 61:177-249 64:225-231 76:5-30 79:53-66 82:5-27 82:78-120 103:0-63 109:180-270 118:153-237 136:276-351 142:255-273 145:234-258 148:138-192 157:114-135 157:168-219 157:282-303 169:0-84 169:192-276 187:130-183 205:0-69 211:0-201 214:54-115 214:204-222 223:249-390 220:117-120 226:24-39 247:620-813 280:147-168 280:177-195 286:250-309 313:558-561 313:611-711 322:474-492 331:537-585 334:222-411 343:291-300 343:326-468 352:80-174 358:207-522 361:0-81 370:231-279 376:168-348 379:405-438 382:114-126 391:120-177 397:147-186` } },
{ x: 240, y: 520, d: {
g: `136:553-694 520:445-513 541:550-696 544:520-600 547:470-560 553:455-630 556:500-900 574:420-600 580:420-540 583:530-620 598:400-540 601:470-530 604:360-545 607:460-545 610:470-560 613:500-590 616:420-540 619:440-600 631:510-620 634:440-580 637:500-600 640:560-660 643:600-678 646:440-610 649:470-670 655:190-555 658:208-460 661:200-440 664:195-762 667:200-430 670:222-738 673:190-555 676:187-230 679:190-270 682:200-220 685:178-230`,
s: `142|30-565 151|445-685 160|208-685 169|30-685 178|30-667 208|30-652 334|30-457 358|283-604 361|30-629 379|30-586 403|30-538 466|30-190 517|190-349 190:466-517 187|655-677 196|660-682 565:142-151 445:151-160 208:160-169 457:334-358 586:379-410 538:403-439 604:358-400 628:361-380 667:178-190`,
m: `439|523-550 410|574-598 421|565-580 448|556-568 472|577-592 400|610-622 397|634-650 379|616-643 574:410-421 565:421-448 583:448-472 556:448-500 550:439-460 523:439-470 470|523-532 532:470-500 541:503-520 550:460-540 592:410-490 598:410-500 610:405-470 616:379-400 622:379-440 634:397-470 643:379-400 652:397-475 682:151-190 685:151-200 547:475-520 535:510-560`,
p: `529:500-700 559:455-680 562:640-720 565:600-670 583:490-570 589:490-560 586:520-590 592:530-580 616:480-560 625:410-460 628:410-440 640:500-610 646:530-600 688:168-188 685:165-190`,
b: `523:453-468 523:560-696 526:545-718 550:540-600 559:700-750 568:650-717 571:630-683 583:550-600 595:540-648 598:425-453 610:560-606 619:455-490 622:430-470 628:545-600 646:560-613 652:208-246 652:297-318 688:170-188`,
k: `136:694-807 529:547-570 550:562-627 583:672-831 586:615-630 598:573-648 628:600-663 634:580-603 637:590-603 646:501-525 667:375-420 679:273-285` } }
];
const NS = 'http://www.w3.org/2000/svg';
const svg = document.getElementById('tree');
for (const t of TABLES) for (const [key, color] of Object.entries(COLORS)) {
  if (!t.d[key]) continue;
  let d = '';
  const px = v => Math.round(v / 3), cell = v => Math.floor(v / 3);
  for (const tok of t.d[key].trim().split(/\s+/)) {
    if (tok.includes('|')) {
      const [a, r] = tok.split('|'), [p, q] = r.split('-').map(Number);
      d += `M${t.x + cell(+a)} ${t.y + cell(p)}h1v${cell(q) - cell(p) + 1}h-1z`;
    } else {
      const [a, r] = tok.split(':'), [p, q] = r.split('-').map(Number), ys = a.split('~').map(Number);
      const y1 = cell(ys[0]), y2 = cell(ys[ys.length - 1]);
      d += `M${t.x + px(p)} ${t.y + y1}h${Math.max(1, px(q) - px(p))}v${y2 - y1 + 1}H${t.x + px(p)}z`;
    }
  }
  const path = document.createElementNS(NS, 'path');
  path.setAttribute('d', d);
  path.setAttribute('fill', color);
  path.setAttribute('fill-rule', 'nonzero');
  svg.appendChild(path);
}
```
